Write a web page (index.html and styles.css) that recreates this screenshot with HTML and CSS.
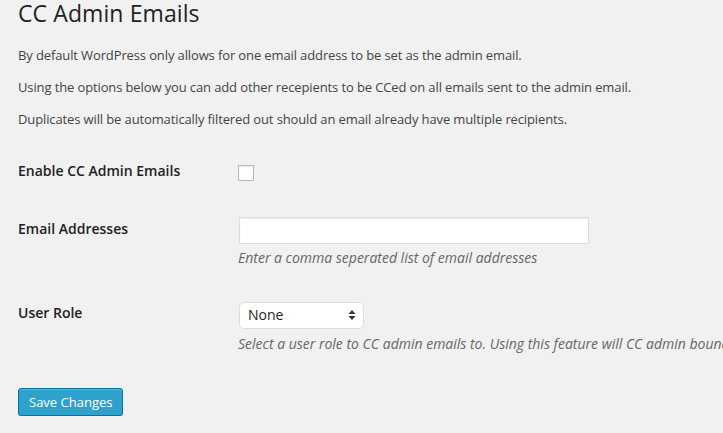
FILE: index.html
```html
<!DOCTYPE html>
<html lang="en">
<head>
<meta charset="utf-8">
<title>CC Admin Emails</title>
<link rel="stylesheet" href="styles.css">
</head>
<body>
<div class="wrap">
  <h2 class="page-title">CC Admin Emails</h2>
  <p class="intro">By default WordPress only allows for one email address to be set as the admin email.</p>
  <p class="intro">Using the options below you can add other recepients to be CCed on all emails sent to the admin email.</p>
  <p class="intro">Duplicates will be automatically filtered out should an email already have multiple recipients.</p>

  <form class="settings">
    <table class="form-table">
      <tr>
        <th class="field-label">Enable CC Admin Emails</th>
        <td class="field"><input type="checkbox" class="checkbox"></td>
      </tr>
      <tr>
        <th class="field-label">Email Addresses</th>
        <td class="field">
          <input type="text" class="text-input">
          <p class="description desc-email">Enter a comma seperated list of email addresses</p>
        </td>
      </tr>
      <tr>
        <th class="field-label">User Role</th>
        <td class="field">
          <div class="select-box"><span class="select-value">None</span><svg class="select-arrows" width="8" height="12" viewBox="0 0 8 12"><path d="M4 1 L7.5 5 L0.5 5 Z" fill="#333"/><path d="M4 11 L7.5 7 L0.5 7 Z" fill="#333"/></svg></div>
          <p class="description desc-role">Select a user role to CC admin emails to. Using this feature will CC admin bound emails to all users with the selected role.</p>
        </td>
      </tr>
    </table>
    <div class="submit">
      <button type="button" class="button-primary">Save Changes</button>
    </div>
  </form>
</div>
</body>
</html>
```

FILE: styles.css
```css
html, body {
  margin: 0;
  padding: 0;
  background: #f1f1f1;
  overflow: hidden;
}
body {
  font-family: "Open Sans", "Noto Sans", sans-serif;
  font-size: 13px;
  color: #444;
}
.wrap {
  padding: 0 18px;
}
.page-title {
  margin: 0;
  padding: 0 0 6px;
  font-size: 23px;
  font-weight: 400;
  line-height: 27px;
  color: #222;
  letter-spacing: 0.1px;
}
.intro {
  margin: 13px 0;
  font-size: 13px;
  line-height: 19px;
  letter-spacing: -0.12px;
}
.form-table {
  width: 100%;
  table-layout: fixed;
  border-collapse: collapse;
  border-spacing: 0;
}
.field-label {
  width: 200px;
  padding: 20px 10px 20px 0;
  text-align: left;
  vertical-align: top;
  font-size: 14px;
  font-weight: 600;
  line-height: 1.3;
  color: #222;
  white-space: nowrap;
}
.field {
  padding: 15px 10px;
  vertical-align: top;
  line-height: 1.3;
  overflow: visible;
}
.checkbox {
  appearance: none;
  -webkit-appearance: none;
  display: block;
  margin: 8px 0 0;
  width: 16px;
  height: 16px;
  box-sizing: border-box;
  border: 1px solid #b4b9be;
  background: #fff;
  box-shadow: inset 0 1px 2px rgba(0,0,0,.1);
}
.text-input {
  display: block;
  margin: 1.5px 0 0 1px;
  width: 350px;
  height: 27px;
  box-sizing: border-box;
  border: 1px solid #ddd;
  background: #fff;
  box-shadow: inset 0 1px 2px rgba(0,0,0,.07);
  padding: 3px 5px;
  font: inherit;
}
.description {
  margin: 4px 0 0;
  font-size: 14px;
  font-style: italic;
  line-height: 19.5px;
  color: #666;
  white-space: nowrap;
}
.desc-email {
  margin-bottom: 1.5px;
}
.select-box {
  display: flex;
  align-items: center;
  justify-content: space-between;
  margin: 3px 0 0 1px;
  width: 125px;
  height: 27px;
  box-sizing: border-box;
  padding: 0 7px 0 8px;
  border: 1px solid #ddd;
  border-radius: 5px;
  background: #fff;
  font-size: 14px;
  color: #222;
}
.select-arrows {
  display: block;
}
.desc-role {
  margin-top: 5px;
}
.submit {
  padding-top: 19.5px;
}
.button-primary {
  display: block;
  height: 28px;
  box-sizing: border-box;
  padding: 0 10px 1px;
  border: 1px solid #0074a2;
  border-radius: 3px;
  background: #2ea2cc;
  box-shadow: inset 0 1px 0 rgba(120,200,230,.5), 0 1px 0 rgba(0,0,0,.15);
  color: #fff;
  font-family: "Open Sans", "Noto Sans", sans-serif;
  font-size: 13px;
  line-height: 26px;
}
```
